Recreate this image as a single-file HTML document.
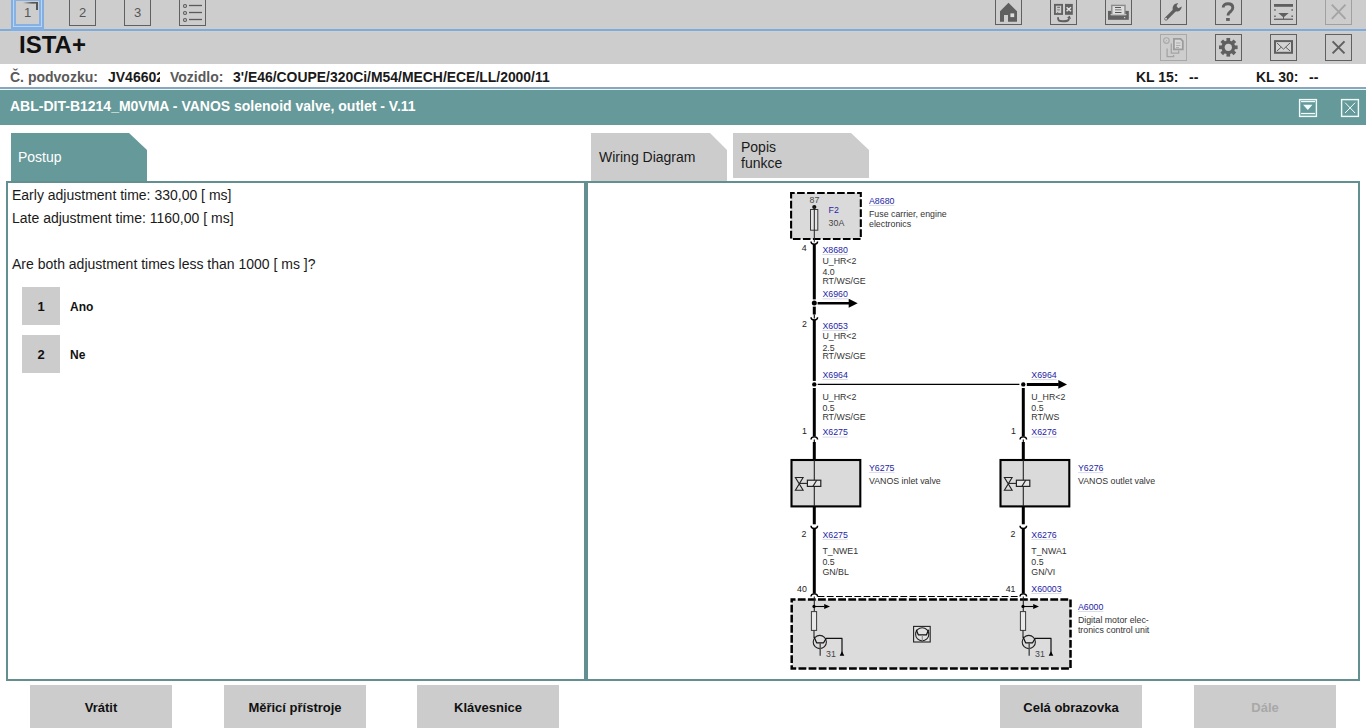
<!DOCTYPE html>
<html><head><meta charset="utf-8">
<style>
*{margin:0;padding:0;box-sizing:border-box}
html,body{width:1366px;height:728px;overflow:hidden;background:#fff;font-family:"Liberation Sans",sans-serif;color:#1a1a1a}
.a{position:absolute}
#top{left:0;top:0;width:1366px;height:64px;background:#cdcdcd}
.bl1{left:0;top:28px;width:1366px;height:1px;background:#bcd0e6}
.bl2{left:0;top:29px;width:1366px;height:2px;background:#8aa8c8}
.bl3{left:0;top:31px;width:1366px;height:1px;background:#c6d2de}
.ib{width:27px;height:27px;border:1px solid #606060}
.tabn{font-size:13px;color:#555;text-align:center;line-height:27px}
#ista{left:19px;top:31px;font-size:24px;font-weight:bold;color:#111;line-height:28px}
#info{left:0;top:64px;width:1366px;height:23px;background:#fff}
.lb{font-size:14px;font-weight:bold;line-height:16px;top:69px;white-space:nowrap}
.g{color:#5a5a5a}
#l87{left:0;top:87px;width:1366px;height:2px;background:#8ca5bd}
#l89{left:0;top:89px;width:1366px;height:1px;background:#dff8f8}
#hdr{left:0;top:90px;width:1366px;height:35px;background:#669999}
#hdrt{left:10px;top:98px;font-size:14px;font-weight:bold;color:#fff;white-space:nowrap;line-height:16px}
.panel{border:2px solid #628f8f;background:#fff}
.txt{font-size:14px;color:#1a1a1a;line-height:16px;white-space:nowrap}
.nb{left:22px;width:38px;height:38px;background:#cccccc;font-size:13px;font-weight:bold;text-align:center;line-height:40px;color:#111}
.nl{left:70px;font-size:12px;font-weight:bold;color:#111;line-height:16px}
.btn{top:685px;height:43px;background:#cccccc;font-size:13px;font-weight:bold;text-align:center;line-height:45px;color:#111}
</style></head><body>
<div id="top" class="a"></div>
<div class="a bl1"></div><div class="a bl2"></div><div class="a bl3"></div>

<!-- tab 1 selected -->
<div class="a" style="left:11px;top:-2px;width:33px;height:33px;background:#84aee0"></div>
<div class="a" style="left:13px;top:-2px;width:29px;height:29px;background:#b2d6fc"></div>
<div class="a" style="left:14px;top:-2px;width:27px;height:28px;background:#88b0e0"></div>
<div class="a tabn" style="left:16px;top:1px;width:23px;height:23px;background:#cdcdcd;line-height:23px">1</div>
<div class="a ib tabn" style="left:69px;top:-2px;height:28px">2</div>
<div class="a ib tabn" style="left:124px;top:-2px;height:28px">3</div>
<div class="a ib" style="left:179px;top:-2px;height:28px"></div>

<!-- top right icon boxes -->
<div class="a ib" style="left:995px;top:-3px;height:28px"></div>
<div class="a ib" style="left:1050px;top:-3px;height:28px"></div>
<div class="a ib" style="left:1105px;top:-3px;height:28px"></div>
<div class="a ib" style="left:1160px;top:-3px;height:28px"></div>
<div class="a ib" style="left:1215px;top:-3px;height:28px"></div>
<div class="a ib" style="left:1270px;top:-3px;height:28px"></div>
<div class="a ib" style="left:1325px;top:-3px;height:28px;border-color:#a0a0a0"></div>

<div id="ista" class="a">ISTA+</div>
<div class="a ib" style="left:1160px;top:34px;border-color:#a8a8a8"></div>
<div class="a ib" style="left:1215px;top:34px"></div>
<div class="a ib" style="left:1270px;top:34px"></div>
<div class="a ib" style="left:1325px;top:34px"></div>

<div id="info" class="a"></div>
<div class="a lb g" style="left:10px">Č. podvozku:</div>
<div class="a lb" style="left:108px;width:52px;overflow:hidden">JV46602</div>
<div class="a lb g" style="left:170px">Vozidlo:</div>
<div class="a lb" style="left:233px;font-size:13.93px">3'/E46/COUPE/320Ci/M54/MECH/ECE/LL/2000/11</div>
<div class="a lb" style="left:1136px">KL 15:</div>
<div class="a lb" style="left:1189px">--</div>
<div class="a lb" style="left:1256px">KL 30:</div>
<div class="a lb" style="left:1309px">--</div>

<div id="l87" class="a"></div><div id="l89" class="a"></div>
<div id="hdr" class="a"></div>
<div id="hdrt" class="a">ABL-DIT-B1214_M0VMA - VANOS solenoid valve, outlet - V.11</div>

<!-- tabs -->
<svg class="a" style="left:0;top:0" width="1366" height="728">
<polygon points="11,133 129,133 147,150 147,182 11,182" fill="#669999"/>
<polygon points="591,133 710,133 727,150 727,182 591,182" fill="#cccccc"/>
<polygon points="733,133 851,133 869,150 869,178 733,178" fill="#cccccc"/>
</svg>
<div class="a txt" style="left:18px;top:149px;color:#fff">Postup</div>
<div class="a txt" style="left:599px;top:149px">Wiring Diagram</div>
<div class="a txt" style="left:741px;top:139px">Popis</div>
<div class="a txt" style="left:741px;top:155px">funkce</div>

<div class="a panel" style="left:6px;top:181px;width:580px;height:500px"></div>
<div class="a panel" style="left:586px;top:181px;width:774px;height:500px"></div>

<div class="a txt" style="left:12px;top:187px">Early adjustment time: 330,00 [ ms]</div>
<div class="a txt" style="left:12px;top:210px">Late adjustment time: 1160,00 [ ms]</div>
<div class="a txt" style="left:12px;top:256px">Are both adjustment times less than 1000 [ ms ]?</div>
<div class="a nb" style="top:287px">1</div>
<div class="a nl" style="top:299px">Ano</div>
<div class="a nb" style="top:335px">2</div>
<div class="a nl" style="top:347px">Ne</div>

<svg class="a" style="left:0;top:0" width="1366" height="728" font-family="Liberation Sans, sans-serif" font-size="8.8">
<rect x="791.1" y="193" width="69.7" height="46" fill="#dadada" stroke="#000" stroke-width="2.1" stroke-dasharray="7.6 2.4" stroke-dashoffset="4"/>
<rect x="791.5" y="460" width="68.8" height="46.4" fill="#dadada" stroke="#000" stroke-width="2.1"/>
<rect x="1000.5" y="460" width="68.8" height="46.4" fill="#dadada" stroke="#000" stroke-width="2.1"/>
<rect x="791.7" y="599.5" width="278.8" height="69.1" fill="#dcdcdc" stroke="#000" stroke-width="2.5" stroke-dasharray="7.8 2.3" stroke-dashoffset="4"/>
<circle cx="814.3" cy="207" r="2.1" fill="#111"/>
<rect x="810.5" y="209.5" width="7.3" height="20.7" fill="#e4e4e4" stroke="#3a3a3a" stroke-width="1"/>
<line x1="814.3" y1="207" x2="814.3" y2="242.3" stroke="#222" stroke-width="1" />
<text x="809.6" y="202.5" fill="#4a4a4a">87</text>
<text x="828.6" y="212.8" fill="#2424a6">F2</text>
<rect x="828.6" y="214.20000000000002" width="10.3" height="0.9" fill="#d6d8e6"/>
<text x="828.6" y="226.2" fill="#444">30A</text>
<text x="869" y="203.5" fill="#2424a6">A8680</text>
<rect x="869" y="204.9" width="25.4" height="0.9" fill="#d6d8e6"/>
<text x="869" y="216.5" fill="#333">Fuse carrier, engine</text>
<text x="869" y="226.8" fill="#333">electronics</text>
<path d="M811.0,241.6 C811.0,245.2 817.5999999999999,245.2 817.5999999999999,241.6" fill="none" stroke="#000" stroke-width="1.4"/>
<line x1="814.3" y1="244.3" x2="814.3" y2="299.4" stroke="#000" stroke-width="3" />
<circle cx="814.3" cy="303.1" r="2.5" fill="#000"/>
<line x1="817.6" y1="303.3" x2="849.2" y2="303.3" stroke="#000" stroke-width="2.6" />
<polygon points="848.7,298.8 857.7,303.3 848.7,307.8" fill="#000"/>
<line x1="814.3" y1="306.6" x2="814.3" y2="314.5" stroke="#000" stroke-width="3" />
<line x1="814.3" y1="314.5" x2="814.3" y2="318.5" stroke="#000" stroke-width="1.1" />
<path d="M811.0,317.3 C811.0,320.90000000000003 817.5999999999999,320.90000000000003 817.5999999999999,317.3" fill="none" stroke="#000" stroke-width="1.4"/>
<line x1="814.3" y1="320" x2="814.3" y2="380.9" stroke="#000" stroke-width="3" />
<circle cx="814.3" cy="384.4" r="2.2" fill="#000"/>
<line x1="817.7" y1="384.4" x2="1019.4" y2="384.4" stroke="#000" stroke-width="1.2" />
<circle cx="1023.3" cy="384.4" r="2.2" fill="#000"/>
<line x1="1026.8" y1="384.4" x2="1058.8" y2="384.4" stroke="#000" stroke-width="3" />
<polygon points="1058.3,380.0 1067,384.4 1058.3,388.79999999999995" fill="#000"/>
<line x1="814.3" y1="388" x2="814.3" y2="436.6" stroke="#000" stroke-width="3" />
<line x1="1023.3" y1="388" x2="1023.3" y2="436.6" stroke="#000" stroke-width="3" />
<path d="M811.0,439.6 C811.0,436.0 817.5999999999999,436.0 817.5999999999999,439.6" fill="none" stroke="#000" stroke-width="1.4"/>
<line x1="814.3" y1="439.5" x2="814.3" y2="442.5" stroke="#000" stroke-width="1.1" />
<line x1="814.3" y1="442" x2="814.3" y2="460" stroke="#000" stroke-width="3" />
<line x1="814.3" y1="460" x2="814.3" y2="506.4" stroke="#222" stroke-width="1.1" />
<line x1="814.3" y1="506.4" x2="814.3" y2="524.3" stroke="#000" stroke-width="3" />
<path d="M811.0,525.8 C811.0,529.4 817.5999999999999,529.4 817.5999999999999,525.8" fill="none" stroke="#000" stroke-width="1.4"/>
<line x1="814.3" y1="528.3" x2="814.3" y2="593.7" stroke="#000" stroke-width="3" />
<path d="M811.0,596.6 C811.0,593.0 817.5999999999999,593.0 817.5999999999999,596.6" fill="none" stroke="#000" stroke-width="1.4"/>
<line x1="814.3" y1="596.6" x2="814.3" y2="611.6" stroke="#222" stroke-width="1.1" />
<path d="M1020.0,439.6 C1020.0,436.0 1026.6,436.0 1026.6,439.6" fill="none" stroke="#000" stroke-width="1.4"/>
<line x1="1023.3" y1="439.5" x2="1023.3" y2="442.5" stroke="#000" stroke-width="1.1" />
<line x1="1023.3" y1="442" x2="1023.3" y2="460" stroke="#000" stroke-width="3" />
<line x1="1023.3" y1="460" x2="1023.3" y2="506.4" stroke="#222" stroke-width="1.1" />
<line x1="1023.3" y1="506.4" x2="1023.3" y2="524.3" stroke="#000" stroke-width="3" />
<path d="M1020.0,525.8 C1020.0,529.4 1026.6,529.4 1026.6,525.8" fill="none" stroke="#000" stroke-width="1.4"/>
<line x1="1023.3" y1="528.3" x2="1023.3" y2="593.7" stroke="#000" stroke-width="3" />
<path d="M1020.0,596.6 C1020.0,593.0 1026.6,593.0 1026.6,596.6" fill="none" stroke="#000" stroke-width="1.4"/>
<line x1="1023.3" y1="596.6" x2="1023.3" y2="611.6" stroke="#222" stroke-width="1.1" />
<line x1="817.6" y1="596.5" x2="1020" y2="596.5" stroke="#000" stroke-width="1.1" stroke-dasharray="6.8 2.4"/>
<path d="M795.4,477.5 L803.1,477.5 L795.4,490.2 L803.1,490.2 Z" fill="none" stroke="#222" stroke-width="1.1" stroke-linejoin="miter"/>
<line x1="799.3" y1="483.4" x2="807.4" y2="483.4" stroke="#222" stroke-width="1.1" />
<rect x="807.4" y="480.2" width="13.4" height="6.2" fill="#e6e6e6" stroke="#222" stroke-width="1.2"/>
<line x1="812.9" y1="486.4" x2="816.7" y2="480.2" stroke="#222" stroke-width="1.1" />
<path d="M1004.4,477.5 L1012.1,477.5 L1004.4,490.2 L1012.1,490.2 Z" fill="none" stroke="#222" stroke-width="1.1" stroke-linejoin="miter"/>
<line x1="1008.3" y1="483.4" x2="1016.4" y2="483.4" stroke="#222" stroke-width="1.1" />
<rect x="1016.4" y="480.2" width="13.4" height="6.2" fill="#e6e6e6" stroke="#222" stroke-width="1.2"/>
<line x1="1021.9" y1="486.4" x2="1025.7" y2="480.2" stroke="#222" stroke-width="1.1" />
<text x="869" y="470.5" fill="#2424a6">Y6275</text>
<rect x="869" y="471.9" width="25.4" height="0.9" fill="#d6d8e6"/>
<text x="869" y="483.6" fill="#333">VANOS inlet valve</text>
<text x="1078" y="470.8" fill="#2424a6">Y6276</text>
<rect x="1078" y="472.2" width="25.4" height="0.9" fill="#d6d8e6"/>
<text x="1078" y="483.5" fill="#333">VANOS outlet valve</text>
<circle cx="814" cy="606.4" r="1.6" fill="#000"/>
<line x1="814" y1="606.5" x2="824.5" y2="606.5" stroke="#000" stroke-width="1.1" />
<polygon points="824.2,603.9 830,606.5 824.2,609.1" fill="#000"/>
<rect x="811.4" y="611.6" width="5.2" height="18.8" fill="#e8e8e8" stroke="#3a3a3a" stroke-width="1"/>
<line x1="814" y1="630.4" x2="814" y2="637.5" stroke="#222" stroke-width="1.1" />
<circle cx="819.8" cy="642" r="6.6" fill="none" stroke="#222" stroke-width="1.1"/>
<path d="M814,636.8 L816.6,642.8 L823.6,642.8 L826.2,638.4 L842,638.4 L842,653" fill="none" stroke="#111" stroke-width="1.2" stroke-linejoin="round"/>
<line x1="820.2" y1="643" x2="820.2" y2="655.8" stroke="#555" stroke-width="1.5" />
<polygon points="839.7,655.8 842,651.2 844.3,655.8" fill="#000"/>
<text x="826" y="656.7" fill="#444">31</text>
<circle cx="1023" cy="606.4" r="1.6" fill="#000"/>
<line x1="1023" y1="606.5" x2="1033.5" y2="606.5" stroke="#000" stroke-width="1.1" />
<polygon points="1033.2,603.9 1039,606.5 1033.2,609.1" fill="#000"/>
<rect x="1020.4" y="611.6" width="5.2" height="18.8" fill="#e8e8e8" stroke="#3a3a3a" stroke-width="1"/>
<line x1="1023" y1="630.4" x2="1023" y2="637.5" stroke="#222" stroke-width="1.1" />
<circle cx="1028.8" cy="642" r="6.6" fill="none" stroke="#222" stroke-width="1.1"/>
<path d="M1023,636.8 L1025.6,642.8 L1032.6,642.8 L1035.2,638.4 L1051,638.4 L1051,653" fill="none" stroke="#111" stroke-width="1.2" stroke-linejoin="round"/>
<line x1="1029.2" y1="643" x2="1029.2" y2="655.8" stroke="#555" stroke-width="1.5" />
<polygon points="1048.7,655.8 1051,651.2 1053.3,655.8" fill="#000"/>
<text x="1035" y="656.7" fill="#444">31</text>
<rect x="913.6" y="626.4" width="16.6" height="15.6" fill="#e2e2e2" stroke="#222" stroke-width="1.1"/>
<circle cx="922.2" cy="634.3" r="6.6" fill="none" stroke="#222" stroke-width="1.1"/>
<path d="M916.2,629.8 L918.4,634.9 L926.4,634.9 L928.6,629.8" fill="none" stroke="#111" stroke-width="1.2" stroke-linejoin="round"/>
<line x1="922.3" y1="635" x2="922.3" y2="641" stroke="#888" stroke-width="1.1" />
<text x="1077.9" y="609.6" fill="#2424a6">A6000</text>
<rect x="1077.9" y="611.0" width="25.4" height="0.9" fill="#d6d8e6"/>
<text x="1077.9" y="622.7" fill="#333">Digital motor elec-</text>
<text x="1077.9" y="632.9" fill="#333">tronics control unit</text>
<text x="822.4" y="252.6" fill="#2424a6">X8680</text>
<rect x="822.4" y="254.0" width="25.4" height="0.9" fill="#d6d8e6"/>
<text x="822.4" y="263.5" fill="#333">U_HR&lt;2</text>
<text x="822.4" y="275" fill="#333">4.0</text>
<text x="822.4" y="284" fill="#333">RT/WS/GE</text>
<text x="822.4" y="297" fill="#2424a6">X6960</text>
<rect x="822.4" y="298.4" width="25.4" height="0.9" fill="#d6d8e6"/>
<text x="822.4" y="328.7" fill="#2424a6">X6053</text>
<rect x="822.4" y="330.09999999999997" width="25.4" height="0.9" fill="#d6d8e6"/>
<text x="822.4" y="338.6" fill="#333">U_HR&lt;2</text>
<text x="822.4" y="350.6" fill="#333">2.5</text>
<text x="822.4" y="359.4" fill="#333">RT/WS/GE</text>
<text x="822.4" y="377.7" fill="#2424a6">X6964</text>
<rect x="822.4" y="379.09999999999997" width="25.4" height="0.9" fill="#d6d8e6"/>
<text x="822.4" y="399.6" fill="#333">U_HR&lt;2</text>
<text x="822.4" y="411" fill="#333">0.5</text>
<text x="822.4" y="420.3" fill="#333">RT/WS/GE</text>
<text x="822.4" y="435.2" fill="#2424a6">X6275</text>
<rect x="822.4" y="436.59999999999997" width="25.4" height="0.9" fill="#d6d8e6"/>
<text x="822.4" y="537.5" fill="#2424a6">X6275</text>
<rect x="822.4" y="538.9" width="25.4" height="0.9" fill="#d6d8e6"/>
<text x="822.4" y="554" fill="#333">T_NWE1</text>
<text x="822.4" y="564.9" fill="#333">0.5</text>
<text x="822.4" y="574.5" fill="#333">GN/BL</text>
<text x="1031.3" y="377.8" fill="#2424a6">X6964</text>
<rect x="1031.3" y="379.2" width="25.4" height="0.9" fill="#d6d8e6"/>
<text x="1031.3" y="399.6" fill="#333">U_HR&lt;2</text>
<text x="1031.3" y="411" fill="#333">0.5</text>
<text x="1031.3" y="420.3" fill="#333">RT/WS</text>
<text x="1031.3" y="435.2" fill="#2424a6">X6276</text>
<rect x="1031.3" y="436.59999999999997" width="25.4" height="0.9" fill="#d6d8e6"/>
<text x="1031.3" y="537.5" fill="#2424a6">X6276</text>
<rect x="1031.3" y="538.9" width="25.4" height="0.9" fill="#d6d8e6"/>
<text x="1031.3" y="554" fill="#333">T_NWA1</text>
<text x="1031.3" y="565" fill="#333">0.5</text>
<text x="1031.3" y="574.5" fill="#333">GN/VI</text>
<text x="1031.3" y="591.6" fill="#2424a6">X60003</text>
<rect x="1031.3" y="593.0" width="30.3" height="0.9" fill="#d6d8e6"/>
<text x="801.8" y="251.4" fill="#222">4</text>
<text x="801.9" y="327.1" fill="#222">2</text>
<text x="802" y="434" fill="#222">1</text>
<text x="801.6" y="536.7" fill="#222">2</text>
<text x="797" y="591.5" fill="#222">40</text>
<text x="1011" y="434" fill="#222">1</text>
<text x="1010.6" y="536.7" fill="#222">2</text>
<text x="1005.7" y="591.6" fill="#222">41</text>
</svg>
<svg class="a" style="left:0;top:0" width="1366" height="130">
<!-- tab1 folded corner -->
<defs><linearGradient id="cg" x1="0" x2="1"><stop offset="0" stop-color="#555" stop-opacity="0"/><stop offset="0.6" stop-color="#555" stop-opacity="1"/></linearGradient></defs>
<rect x="23" y="2" width="15" height="1.6" fill="url(#cg)"/>
<rect x="36" y="2" width="2" height="8" fill="#555"/>
<!-- list icon -->
<g fill="none" stroke="#5a5a5a" stroke-width="1.1">
<circle cx="185" cy="6" r="1.5"/><circle cx="185" cy="13" r="1.5"/><circle cx="185" cy="20" r="1.5"/>
</g>
<g stroke="#5a5a5a" stroke-width="1.3">
<line x1="189" y1="5.5" x2="202" y2="5.5"/><line x1="189" y1="12.5" x2="202" y2="12.5"/><line x1="189" y1="19.5" x2="202" y2="19.5"/>
</g>
<!-- home -->
<path d="M1008.5,2.8 L1017,11.3 L1017,21.8 L1008,21.8 L1008,14.9 L1004,14.9 L1004,21.8 L1000,21.8 L1000,11.3 Z" fill="#5f5f5f"/>
<rect x="1010.4" y="13.4" width="3.8" height="3.7" fill="#dcdcdc"/>
<!-- swap -->
<rect x="1054.9" y="4.8" width="7.2" height="9.2" fill="#cdcdcd" stroke="#606060" stroke-width="1.8"/>
<rect x="1057.2" y="6.8" width="2.8" height="1" fill="#666"/>
<rect x="1057.2" y="9" width="2.6" height="1.6" fill="#9a9a9a"/>
<rect x="1057.2" y="12" width="1" height="1" fill="#777"/>
<rect x="1065" y="3.9" width="7.8" height="10.9" fill="#606060"/>
<path d="M1066.6,7.2 L1071,11.2 M1071,7.2 L1066.6,11.2" stroke="#e4e4e4" stroke-width="1.5"/>
<path d="M1058,17.2 C1058,21 1059,21.2 1063,21.2 C1067,21.2 1068.5,21 1069.2,18.2" fill="none" stroke="#606060" stroke-width="1.9"/>
<polygon points="1067,17.6 1069.8,15.8 1071,19" fill="#606060"/>
<!-- print -->
<rect x="1108" y="10.9" width="20.8" height="8.9" fill="#626262"/>
<rect x="1111.8" y="5.4" width="13.2" height="9.4" fill="#dedede" stroke="#8a8a8a" stroke-width="1.4"/>
<rect x="1110.5" y="14.2" width="16" height="1" fill="#cfcfcf"/>
<rect x="1115" y="7" width="6" height="1" fill="#555"/>
<rect x="1115" y="9.2" width="6.5" height="1.2" fill="#8a8a8a"/>
<rect x="1115" y="12" width="6.5" height="1" fill="#555"/>
<rect x="1124" y="17" width="1.2" height="1.2" fill="#ccc"/>
<!-- wrench -->
<path d="M1166,18.8 L1175,9.8" stroke="#5f5f5f" stroke-width="3.3" stroke-linecap="round"/>
<circle cx="1166" cy="18.8" r="1" fill="#cdcdcd"/>
<path d="M1173.2,11.2 C1172,9 1172.6,5.5 1174.8,4 L1178.2,2.9 L1176.5,6 L1178.3,8.2 L1181.8,6.4 C1181.6,9 1180,11 1177.8,11.6 Z" fill="#5f5f5f"/>
<!-- help -->
<path d="M1223.2,7.6 C1223.2,4.9 1225.3,3.8 1227.9,3.8 C1230.9,3.8 1232.8,5.4 1232.8,7.8 C1232.8,10.2 1231,11.2 1229.8,12.2 C1228.6,13.2 1228,13.8 1228,15.6" fill="none" stroke="#606060" stroke-width="2.9"/>
<rect x="1226.1" y="18" width="3.7" height="2.9" fill="#606060"/>
<!-- layout -->
<rect x="1274" y="4" width="19" height="2.8" fill="#5f5f5f"/>
<rect x="1274" y="18.6" width="19" height="1.3" fill="#5f5f5f"/>
<g fill="#5f5f5f"><rect x="1274.2" y="9.2" width="1.5" height="1.5"/><rect x="1274.2" y="15.5" width="1.5" height="1.5"/><rect x="1291.4" y="9.2" width="1.5" height="1.5"/><rect x="1291.4" y="15.5" width="1.5" height="1.5"/></g>
<polygon points="1278.3,13 1288.7,13 1283.5,17.5" fill="#5f5f5f"/>
<rect x="1283" y="16" width="1" height="3" fill="#5f5f5f"/>
<!-- close disabled -->
<path d="M1331.8,4.6 L1345.5,18.9 M1345.5,4.6 L1331.8,18.9" stroke="#a4a4a4" stroke-width="1.9"/>

<!-- row2: docs disabled -->
<circle cx="1166.4" cy="40.6" r="2.8" fill="none" stroke="#a8a8a8" stroke-width="1.1"/>
<path d="M1165.5,41.5 L1167,40" stroke="#a8a8a8" stroke-width="0.8"/>
<path d="M1173.9,38.8 L1180.6,38.8 L1182.8,41 L1182.8,49.4 L1173.9,49.4 Z" fill="#d8d8d8" stroke="#9c9c9c" stroke-width="1.8"/>
<path d="M1176,43 L1180.5,43 M1176,45.5 L1180.5,45.5 M1176,47.5 L1179,47.5" stroke="#a8a8a8" stroke-width="0.9"/>
<path d="M1171.3,43.6 L1171.3,53.2 L1178.7,53.2 L1178.7,50.6" fill="none" stroke="#a4a4a4" stroke-width="1.3"/>
<path d="M1167.1,48.5 L1167.1,56.7 L1173.6,56.7 L1173.6,55" fill="none" stroke="#a4a4a4" stroke-width="1.3"/>
<!-- gear -->
<g fill="#5f5f5f" transform="translate(1228.3,47.3)">
<circle r="6.9"/>
<g id="tooth"><rect x="-1.85" y="-9.3" width="3.7" height="4"/></g>
<use href="#tooth" transform="rotate(45)"/><use href="#tooth" transform="rotate(90)"/><use href="#tooth" transform="rotate(135)"/>
<use href="#tooth" transform="rotate(180)"/><use href="#tooth" transform="rotate(225)"/><use href="#tooth" transform="rotate(270)"/><use href="#tooth" transform="rotate(315)"/>
<circle r="3.6" fill="#cdcdcd"/>
</g>
<!-- mail -->
<rect x="1275" y="41.1" width="17" height="11.7" fill="#d4d4d4" stroke="#5f5f5f" stroke-width="2"/>
<path d="M1276.9,42.9 L1283.5,49.2 L1290.1,42.9 M1276.9,51 L1281.2,47.2 M1290.1,51 L1285.8,47.2" fill="none" stroke="#5f5f5f" stroke-width="1"/>
<!-- close -->
<path d="M1332.6,41.4 L1344.5,53.4 M1344.5,41.4 L1332.6,53.4" stroke="#5f5f5f" stroke-width="2"/>

<!-- header icons -->
<rect x="1299.6" y="99.6" width="16.8" height="16.8" fill="none" stroke="#f2ffff" stroke-width="1.4"/>
<rect x="1301.1" y="100.9" width="13.9" height="1.3" fill="#f2ffff"/>
<rect x="1301.1" y="112.9" width="13.9" height="1.3" fill="#f2ffff"/>
<polygon points="1303.1,104.8 1312.5,104.8 1307.8,110" fill="#f2ffff"/>
<rect x="1341.6" y="99.6" width="16.8" height="16.8" fill="none" stroke="#f2ffff" stroke-width="1.4"/>
<path d="M1345.1,102.7 L1355.1,113 M1355.1,102.7 L1345.1,113" stroke="#f2ffff" stroke-width="1"/>
</svg>

<div class="a btn" style="left:30px;width:142px">Vrátit</div>
<div class="a btn" style="left:224px;width:142px">Měřicí přístroje</div>
<div class="a btn" style="left:417px;width:142px">Klávesnice</div>
<div class="a btn" style="left:1000px;width:142px">Celá obrazovka</div>
<div class="a btn" style="left:1194px;width:142px;color:#a8a8a8">Dále</div>

</body></html>
